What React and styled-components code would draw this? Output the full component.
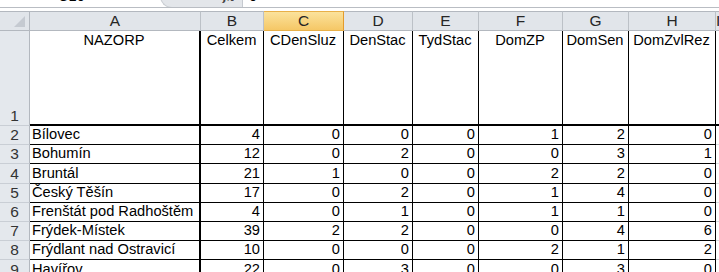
import React from 'react'
import styled, { createGlobalStyle, css } from 'styled-components'

const GlobalStyle = createGlobalStyle`
  html, body {
    margin: 0;
    padding: 0;
    background: #ffffff;
    overflow: hidden;
  }
  body {
    font-family: "Liberation Sans", Arial, sans-serif;
    font-size: 14.67px;
    color: #000;
  }
`

const columns = ['A', 'B', 'C', 'D', 'E', 'F', 'G', 'H', 'I']
const widths = '30px 171px 63px 80px 69px 66px 84px 66px 87px 1fr'

const titles = ['NAZORP', 'Celkem', 'CDenSluz', 'DenStac', 'TydStac', 'DomZP', 'DomSen', 'DomZvlRez']

const rows = [
  ['Bílovec', 4, 0, 0, 0, 1, 2, 0],
  ['Bohumín', 12, 0, 2, 0, 0, 3, 1],
  ['Bruntál', 21, 1, 0, 0, 2, 2, 0],
  ['Český Těšín', 17, 0, 2, 0, 1, 4, 0],
  ['Frenštát pod Radhoštěm', 4, 0, 1, 0, 1, 1, 0],
  ['Frýdek-Místek', 39, 2, 2, 0, 0, 4, 6],
  ['Frýdlant nad Ostravicí', 10, 0, 0, 0, 2, 1, 2],
  ['Havířov', 22, 0, 3, 0, 0, 3, 0],
]

const activeCol = 'C'

/* formula bar, only its bottom edge shows */
const FormulaBar = styled.div`
  display: flex;
  height: 7px;
  overflow: hidden;
  border-bottom: 1px solid #b9bdc3;
`

const NameBox = styled.div`
  width: 160px;
  padding-left: 58px;
  box-sizing: border-box;
  line-height: 17px;
  margin-top: -12px;
`

const FxBox = styled.div`
  width: 82px;
  background: #e3e6ea;
  border-bottom-left-radius: 12px;
  border-left: 1px solid #c9cdd2;
  border-bottom: 1px solid #c9cdd2;
  box-sizing: border-box;
  display: flex;
  justify-content: flex-end;
  padding-right: 8px;
  font-family: "DejaVu Serif", serif;
  font-style: italic;
  font-weight: bold;
  font-size: 11px;
  color: #444;
  line-height: 14px;
  margin-top: -9px;
  height: 17px;
`

const FieldBox = styled.div`
  flex: 1;
  border-left: 1px solid #c6cad0;
  padding-left: 6px;
  line-height: 17px;
  margin-top: -12px;
`

const Gap = styled.div`
  height: 3px;
`

const Sheet = styled.div`
  display: grid;
  grid-template-columns: ${widths};
  grid-template-rows: 20px 95px;
  grid-auto-rows: 19.2px;
`

const Corner = styled.div`
  background: #e1e5ea;
  border-top: 1px solid #b3b8bf;
  border-right: 1px solid #b3b8bf;
  border-bottom: 1px solid #b3b8bf;
  box-sizing: border-box;
  display: flex;
  align-items: flex-end;
  justify-content: flex-end;
  padding: 0 4px 3px 0;
`

const ColHead = styled.div`
  box-sizing: border-box;
  background: #e1e5ea;
  border-top: 1px solid #b3b8bf;
  border-bottom: 1px solid #b3b8bf;
  border-right: 1px solid #bcc1c7;
  text-align: center;
  font-size: 15.5px;
  line-height: 18px;
  color: #262626;
  ${(p) =>
    p.$active &&
    css`
      background: linear-gradient(#fbe29c, #f5c766);
      border-top-color: #e8b049;
      border-bottom-color: #e8b049;
      border-right-color: #e39b2c;
    `}
`

const RowHead = styled.div`
  box-sizing: border-box;
  background: #e4e8ed;
  border-right: 1px solid #b3b8bf;
  border-bottom: 1px solid #c9ced5;
  color: #333;
  display: flex;
  align-items: flex-end;
  justify-content: center;
  font-size: 15.5px;
  line-height: 17px;
  padding-bottom: 1px;
`

const Cell = styled.div`
  box-sizing: border-box;
  border-right: ${(p) => (p.$thick ? '2px' : '1px')} solid #000;
  border-bottom: 1px solid #000;
  display: flex;
  align-items: flex-end;
  justify-content: ${(p) => (p.$num ? 'flex-end' : 'flex-start')};
  padding: 0 3px 1px 2px;
  line-height: 17px;
  white-space: nowrap;
  overflow: hidden;
`

const TitleCell = styled(Cell)`
  border-bottom-width: 2px;
  align-items: flex-start;
  justify-content: center;
  padding-top: 1px;
`

const BlankCell = styled.div`
  border-bottom: 1px solid #d8dce1;
  ${(p) => p.$title && 'border-bottom: 2px solid #000;'}
`

function CornerMark() {
  return (
    <svg width="11" height="11" viewBox="0 0 11 11">
      <polygon points="11,0 11,11 0,11" fill="#c5cad1" />
    </svg>
  )
}

export default function App() {
  return (
    <>
      <GlobalStyle />
      <FormulaBar>
        <NameBox>C10</NameBox>
        <FxBox>fx</FxBox>
        <FieldBox>0</FieldBox>
      </FormulaBar>
      <Gap />
      <Sheet>
        <Corner>
          <CornerMark />
        </Corner>
        {columns.map((c) => (
          <ColHead key={c} $active={c === activeCol}>
            {c}
          </ColHead>
        ))}

        <RowHead>1</RowHead>
        {titles.map((t, i) => (
          <TitleCell key={t} $thick={i === 0}>
            {t}
          </TitleCell>
        ))}
        <BlankCell $title />

        {rows.map((r, ri) => (
          <React.Fragment key={r[0]}>
            <RowHead>{ri + 2}</RowHead>
            {r.map((v, i) => (
              <Cell key={i} $num={i > 0} $thick={i === 0}>
                {v}
              </Cell>
            ))}
            <BlankCell />
          </React.Fragment>
        ))}
      </Sheet>
    </>
  )
}
